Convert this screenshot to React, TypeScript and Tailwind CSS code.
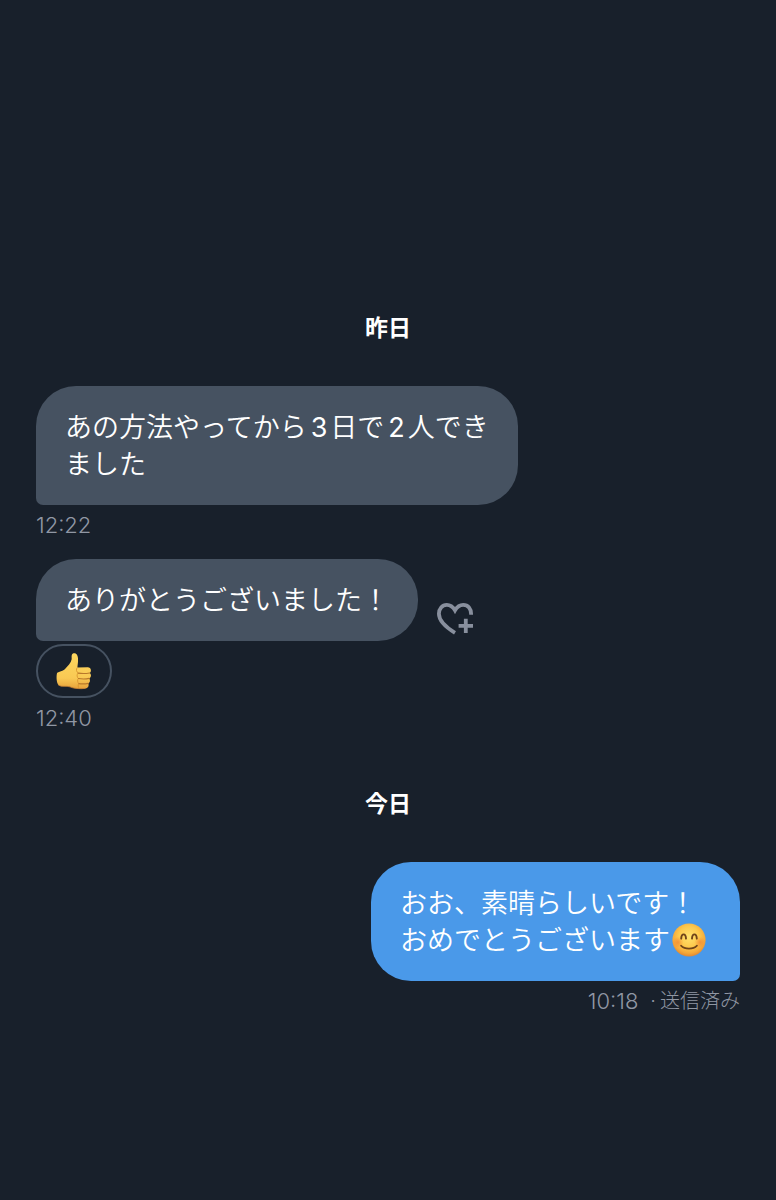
import type { ReactNode } from "react";

type BubbleProps = {
    mine?: boolean;
    children: ReactNode;
}

function DateLabel({ children }: { children: ReactNode }) {
    return (
        <h2 className="text-center text-[23px] leading-8 font-bold text-white">{children}</h2>
    );
}

function Bubble({ mine = false, children }: BubbleProps) {
    return (
        <div
            className={
                mine
                    ? "max-w-[496px] rounded-[40px] rounded-br-[7px] bg-[#4a99e9] pt-[23px] pr-[34px] pb-[22px] pl-[29px] text-[27px] leading-[37px] font-[350] text-white"
                    : "max-w-[496px] rounded-[40px] rounded-bl-[7px] bg-[#465261] px-[29px] pt-[23px] pb-[22px] text-[27px] leading-[37px] font-[350] text-white"
            }
        >
            {children}
        </div>
    );
}

function Digit({ children }: { children: ReactNode }) {
    return <span className="mr-[3px] ml-1 font-normal">{children}</span>;
}

function HeartPlusIcon() {
    return (
        <svg viewBox="0 0 36 32" className="h-8 w-9" fill="none" stroke="currentColor" aria-hidden="true">
            <path
                d="M18 29.8C8.4 24 1.9 17.2 1.9 10.8C1.9 5.6 5.2 1.9 9.8 1.9C13.4 1.9 16 4 18 7.4C20 4 22.6 1.9 26.2 1.9C31 1.9 34.3 5.4 34.1 11.8"
                strokeWidth="3.8"
            />
            <path d="M28.8 15.8V30M21.6 22.9H36" strokeWidth="3.8" />
        </svg>
    );
}

function ThumbsUp() {
    return (
        <svg viewBox="0 0 36 38" className="h-[38px] w-9" aria-hidden="true">
            <defs>
                <linearGradient id="hand" x1="0" y1="0" x2="0" y2="1">
                    <stop offset="0" stopColor="#fdd75f" />
                    <stop offset="0.7" stopColor="#f9c954" />
                    <stop offset="1" stopColor="#e6a23b" />
                </linearGradient>
            </defs>
            <path
                d="M1.2 20.8C3.4 19.4 6.6 19.2 8.8 17.2C11.8 14.2 15 11 15.6 7.6C15.9 5.8 15.2 3.8 16 2.4C17 .7 19.6 .8 20.8 2.6C22.8 5.4 22 10.6 21.4 15.4L31.8 15.2C35.4 15.4 35.8 19.8 33.6 21C35.6 22.2 35.4 25.4 33.2 26.4C34.6 27.8 34.2 30.4 32.2 31.4C33.4 33.4 32 36.2 29.4 36.4C24 37 17.6 36.6 13.8 34.8C10.4 33.6 5.6 35.2 2.6 33.2C.2 30.6 .2 23.2 1.2 20.8Z"
                fill="url(#hand)"
            />
            <path
                d="M21.4 15.4C19.8 17.2 20.4 20 22.2 21C20.6 22.6 20.8 25.2 22.4 26.4C21.2 27.8 21.4 30.4 22.8 31.4C21.8 33 22 35.2 23.4 36.5"
                fill="none" stroke="#d8942f" strokeWidth="0.9"
            />
            <path
                d="M22.2 21.1C26 21.7 30 21.6 33.6 21M22.4 26.5C26 27.1 30 27 33.2 26.4M22.8 31.6C26 32.1 29 32 32.2 31.4"
                fill="none" stroke="#b9782a" strokeWidth="1.1" strokeLinecap="round"
            />
            <path d="M2.6 33.2C5.6 35.2 10.4 33.6 13.8 34.8C17.6 36.6 24 37 29.4 36.4" fill="none" stroke="#c98333" strokeWidth="0.8" />
        </svg>
    );
}

function SmilingFace() {
    return (
        <svg viewBox="0 0 34 34" className="ml-0.5 inline-block size-[34px] align-[-7px]" role="img" aria-label="笑顔">
            <defs>
                <radialGradient id="face" cx="0.5" cy="0.4" r="0.62">
                    <stop offset="0" stopColor="#ffe26e" />
                    <stop offset="0.5" stopColor="#fdc94d" />
                    <stop offset="0.8" stopColor="#f5a838" />
                    <stop offset="1" stopColor="#dd8030" />
                </radialGradient>
                <radialGradient id="cheek">
                    <stop offset="0" stopColor="#f0702d" stopOpacity="0.55" />
                    <stop offset="1" stopColor="#f0702d" stopOpacity="0" />
                </radialGradient>
            </defs>
            <circle cx="17" cy="17" r="16.6" fill="url(#face)" />
            <circle cx="6" cy="19.2" r="5.6" fill="url(#cheek)" />
            <circle cx="28" cy="19.2" r="5.6" fill="url(#cheek)" />
            <path
                d="M9.2 15.6C9.6 10 13.6 10 14 15.6M20 15.6C20.4 10 24.4 10 24.8 15.6"
                fill="none" stroke="#70441a" strokeWidth="1.9" strokeLinecap="round"
            />
            <path d="M9 22.6C12.8 26.6 21.2 26.6 25 22.6" fill="none" stroke="#70441a" strokeWidth="1.6" strokeLinecap="round" />
        </svg>
    );
}

export default function App() {
    return (
        <main className="min-h-screen bg-[#18202b] px-9 pt-78 pb-20 font-['Inter','Noto_Sans_CJK_JP',sans-serif]" lang="ja">
            <section>
                <DateLabel>昨日</DateLabel>
                <div className="mt-[42px] flex flex-col items-start">
                    <Bubble>
                        あの方法やってから<Digit>3</Digit>日で<Digit>2</Digit>人でき<br />
                        ました
                    </Bubble>
                    <time className="mt-1.5 text-[22px] leading-7 font-light text-[#9097a4]">12:22</time>
                </div>
                <div className="mt-5 flex flex-col items-start">
                    <div className="flex items-end gap-[19px]">
                        <Bubble>ありがとうございました！</Bubble>
                        <button type="button" aria-label="リアクションを追加" className="mb-1.5 text-[#888f9d]">
                            <HeartPlusIcon />
                        </button>
                    </div>
                    <button
                        type="button"
                        aria-label="いいね"
                        className="mt-[3px] flex h-[54px] w-[76px] items-center justify-center rounded-full border-2 border-[#465261]"
                    >
                        <ThumbsUp />
                    </button>
                    <time className="mt-1.5 text-[22px] leading-7 font-light text-[#9097a4]">12:40</time>
                </div>
            </section>
            <section className="mt-14">
                <DateLabel>今日</DateLabel>
                <div className="mt-[42px] flex flex-col items-end">
                    <Bubble mine>
                        おお、素晴らしいです！<br />
                        おめでとうございます<SmilingFace />
                    </Bubble>
                    <p className="mt-1.5 flex text-[22px] leading-7 font-light text-[#9097a4]">
                        <time className="mr-3">10:18</time>
                        <span className="mr-1 text-xl leading-7">·</span>
                        <span className="text-xl leading-7">送信済み</span>
                    </p>
                </div>
            </section>
        </main>
    );
}
